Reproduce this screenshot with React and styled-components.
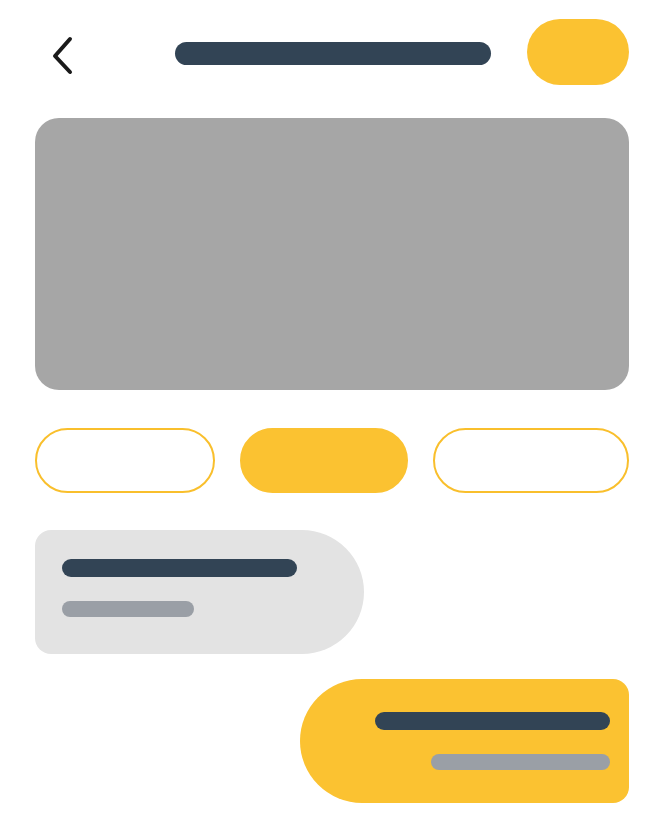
import React from 'react';
import styled, { createGlobalStyle } from 'styled-components';

const GlobalStyle = createGlobalStyle`
  body {
    margin: 0;
    background: #ffffff;
    font-family: "Liberation Sans", Arial, sans-serif;
  }
`;

export default function App() {
  return (
    <Page>
      <GlobalStyle />
      <Header>
        <BackButton aria-label="back">
          <svg width="26" height="42" viewBox="0 0 26 42">
            <path d="M22 6 L7 23 L22 39" fill="none" stroke="#1a1a1a" strokeWidth="4" strokeLinecap="round" strokeLinejoin="round" />
          </svg>
        </BackButton>
        <TitleBar />
        <ActionPill />
      </Header>

      <Cover />

      <Tabs>
        <Tab $width={180} />
        <Tab $width={168} $active />
        <Tab $width={196} />
      </Tabs>

      <Thread>
        <Bubble $side="left">
          <Line $width={235} $tone="dark" />
          <Line $width={132} $tone="light" />
        </Bubble>
        <Bubble $side="right">
          <Line $width={235} $tone="dark" />
          <Line $width={179} $tone="light" />
        </Bubble>
      </Thread>
    </Page>
  );
}

const Page = styled.div`
  width: 594px;
  padding: 19px 34px 0 35px;
`;

const Header = styled.div`
  display: grid;
  grid-template-columns: 104px 316px 102px;
  column-gap: 36px;
  align-items: center;
  height: 66px;
`;

const BackButton = styled.div`
  display: flex;
  align-items: center;
  padding-left: 13px;
  margin-top: 4px;
`;

const TitleBar = styled.div`
  height: 23px;
  border-radius: 12px;
  background: #324455;
  margin-top: 3px;
`;

const ActionPill = styled.div`
  height: 66px;
  border-radius: 33px;
  background: #fbc231;
`;

const Cover = styled.div`
  margin-top: 33px;
  height: 272px;
  border-radius: 24px;
  background: #a6a6a6;
`;

const Tabs = styled.div`
  margin-top: 38px;
  display: flex;
  justify-content: space-between;
`;

const Tab = styled.div`
  box-sizing: border-box;
  width: ${p => p.$width}px;
  height: 65px;
  border-radius: 33px;
  background: ${p => (p.$active ? '#fbc231' : '#ffffff')};
  border: 2px solid ${p => (p.$active ? '#fbc231' : '#f9bf2c')};
`;

const Thread = styled.div`
  margin-top: 37px;
  display: flex;
  flex-direction: column;
  gap: 25px;
`;

const Bubble = styled.div`
  box-sizing: border-box;
  width: 329px;
  height: 124px;
  display: flex;
  flex-direction: column;
  gap: 24px;
  align-self: ${p => (p.$side === 'left' ? 'flex-start' : 'flex-end')};
  align-items: ${p => (p.$side === 'left' ? 'flex-start' : 'flex-end')};
  background: ${p => (p.$side === 'left' ? '#e3e3e3' : '#fbc231')};
  border-radius: ${p => (p.$side === 'left' ? '16px 62px 62px 16px' : '62px 16px 16px 62px')};
  padding: ${p => (p.$side === 'left' ? '29px 0 0 27px' : '33px 19px 0 0')};
`;

const Line = styled.div`
  width: ${p => p.$width}px;
  height: ${p => (p.$tone === 'dark' ? 18 : 16)}px;
  border-radius: 9px;
  background: ${p => (p.$tone === 'dark' ? '#324455' : '#9a9fa6')};
`;
